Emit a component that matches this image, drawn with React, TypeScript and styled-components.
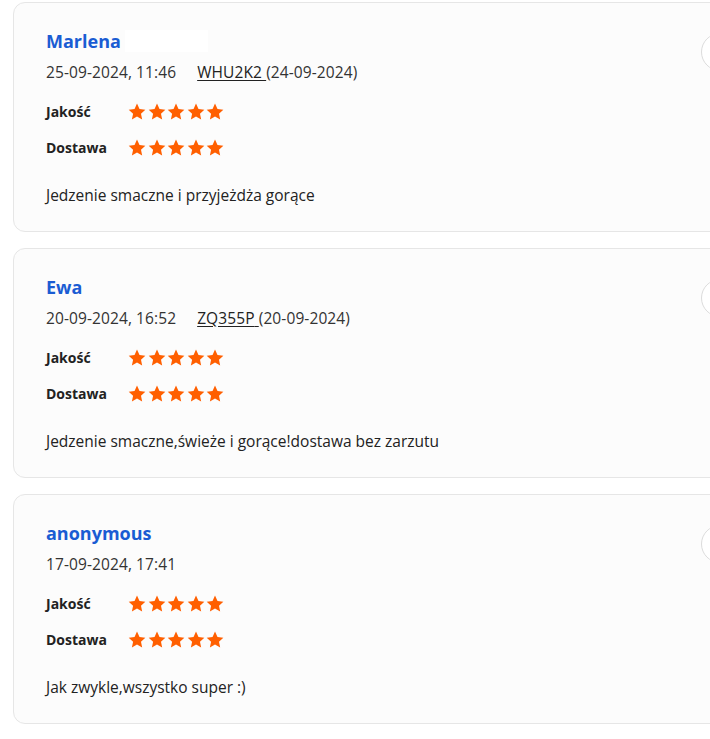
import React from 'react';
import styled, { createGlobalStyle } from 'styled-components';

const GlobalStyle = createGlobalStyle`
  html, body {
    margin: 0;
    padding: 0;
    background: #ffffff;
    overflow: hidden;
  }
  body {
    font-family: 'Open Sans', 'Noto Sans', sans-serif;
    color: #222;
  }
`;

interface Review {
  name: string;
  redacted?: boolean;
  date: string;
  order?: string;
  orderDate?: string;
  quality: number;
  delivery: number;
  comment: string;
}

const reviews: Review[] = [
  {
    name: 'Marlena',
    redacted: true,
    date: '25-09-2024, 11:46',
    order: 'WHU2K2',
    orderDate: '24-09-2024',
    quality: 5,
    delivery: 5,
    comment: 'Jedzenie smaczne i przyjeżdża gorące'
  },
  {
    name: 'Ewa',
    date: '20-09-2024, 16:52',
    order: 'ZQ355P',
    orderDate: '20-09-2024',
    quality: 5,
    delivery: 5,
    comment: 'Jedzenie smaczne,świeże i gorące!dostawa bez zarzutu'
  },
  {
    name: 'anonymous',
    date: '17-09-2024, 17:41',
    quality: 5,
    delivery: 5,
    comment: 'Jak zwykle,wszystko super :)'
  }
];

const Star = () => (
  <svg width="18" height="17" viewBox="0 0 24 23">
    <path
      d="M12 0.8l3.4 7.3 7.9 0.9-5.9 5.4 1.6 7.9L12 18.3l-6.9 4 1.6-7.9L0.8 9l7.9-0.9z"
      fill="#ff5f00"
    />
  </svg>
);

const App: React.FC = () => (
  <>
    <GlobalStyle />
    <List>
      {reviews.map((r, i) => (
        <Card key={i}>
          <Main>
            <Name>
              {r.name}
              {r.redacted && <Redacted />}
            </Name>
            <Meta>
              <span>{r.date}</span>
              {r.order && (
                <OrderInfo>
                  <OrderLink>{r.order} </OrderLink>({r.orderDate})
                </OrderInfo>
              )}
            </Meta>
            <Ratings>
              <RatingRow>
                <Label>Jakość</Label>
                <Stars>
                  {Array.from({ length: r.quality }).map((_, j) => (
                    <Star key={j} />
                  ))}
                </Stars>
              </RatingRow>
              <RatingRow>
                <Label>Dostawa</Label>
                <Stars>
                  {Array.from({ length: r.delivery }).map((_, j) => (
                    <Star key={j} />
                  ))}
                </Stars>
              </RatingRow>
            </Ratings>
            <Comment>{r.comment}</Comment>
          </Main>
          <CircleButton />
        </Card>
      ))}
    </List>
  </>
);

const List = styled.div`
  display: flex;
  flex-direction: column;
  gap: 16px;
  padding: 2px 0 0 13px;
  width: 767px;
`;

const Card = styled.div`
  display: flex;
  justify-content: space-between;
  align-items: flex-start;
  background: #fcfcfc;
  border: 1px solid #e6e6e6;
  border-radius: 12px;
  padding: 26px 40px 26px 32px;
`;

const Main = styled.div`
  display: flex;
  flex-direction: column;
`;

const Name = styled.div`
  display: flex;
  align-items: center;
  height: 24px;
  font-size: 18px;
  font-weight: 700;
  color: #1a5cd3;
`;

const Redacted = styled.span`
  display: inline-block;
  width: 83px;
  height: 22px;
  margin-left: 4px;
  background: #ffffff;
`;

const Meta = styled.div`
  display: flex;
  gap: 21px;
  margin-top: 9px;
  font-size: 15.5px;
  line-height: 20px;
  color: #333;
  letter-spacing: 0.1px;
`;

const OrderInfo = styled.span`
  color: #333;
`;

const OrderLink = styled.span`
  text-decoration: underline;
  text-underline-offset: 2px;
  color: #222;
`;

const Ratings = styled.div`
  display: flex;
  flex-direction: column;
  gap: 12px;
  margin-top: 17px;
`;

const RatingRow = styled.div`
  display: flex;
  align-items: center;
  height: 24px;
`;

const Label = styled.span`
  width: 82px;
  font-size: 14px;
  font-weight: 700;
  color: #222;
`;

const Stars = styled.div`
  display: flex;
  gap: 1.5px;
`;

const Comment = styled.p`
  margin: 26px 0 0;
  font-size: 15.5px;
  line-height: 20px;
  color: #222;
`;

const CircleButton = styled.button`
  width: 38px;
  height: 38px;
  margin-top: 4px;
  border-radius: 50%;
  border: 1px solid #dcdcdc;
  background: #fff;
  padding: 0;
  flex-shrink: 0;
`;

export default App;
